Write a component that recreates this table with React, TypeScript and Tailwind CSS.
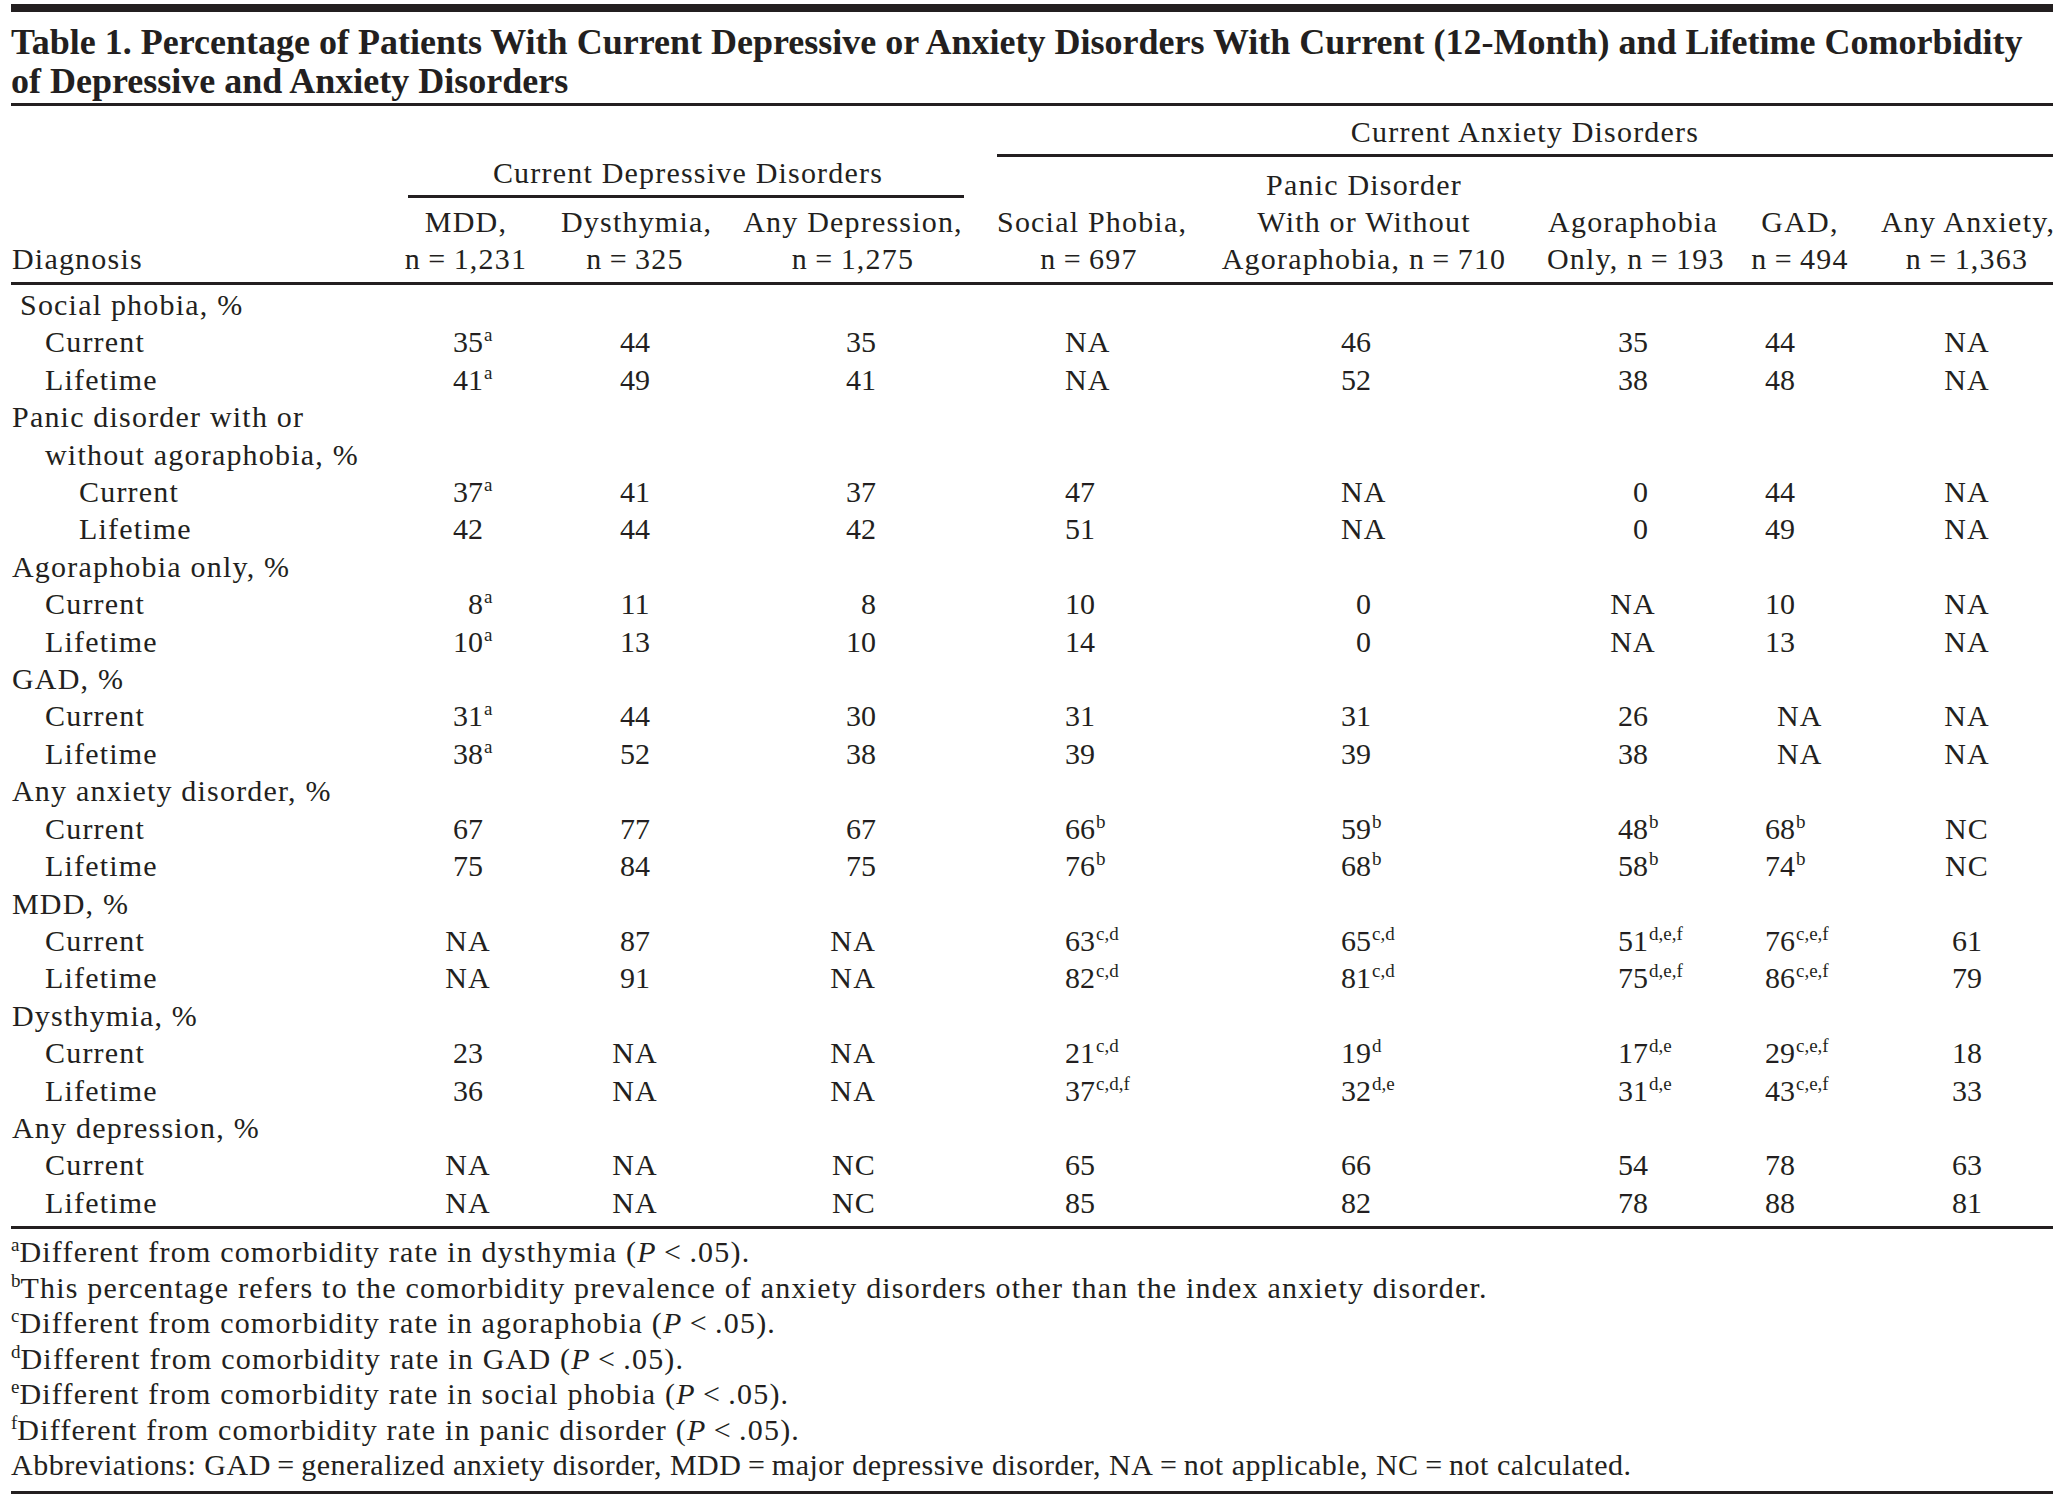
import type { ReactNode } from "react";

type Row = { label: string; level: 0 | 1 | 2; values?: string[]; extraIndent?: boolean };

const rows: Row[] = [
    { label: "Social phobia, %", level: 0, extraIndent: true },
    { label: "Current", level: 1, values: ["35^a", "44", "35", "NA", "46", "35", "44", "NA"] },
    { label: "Lifetime", level: 1, values: ["41^a", "49", "41", "NA", "52", "38", "48", "NA"] },
    { label: "Panic disorder with or", level: 0 },
    { label: "without agoraphobia, %", level: 1 },
    { label: "Current", level: 2, values: ["37^a", "41", "37", "47", "NA", "0", "44", "NA"] },
    { label: "Lifetime", level: 2, values: ["42", "44", "42", "51", "NA", "0", "49", "NA"] },
    { label: "Agoraphobia only, %", level: 0 },
    { label: "Current", level: 1, values: ["8^a", "11", "8", "10", "0", "NA", "10", "NA"] },
    { label: "Lifetime", level: 1, values: ["10^a", "13", "10", "14", "0", "NA", "13", "NA"] },
    { label: "GAD, %", level: 0 },
    { label: "Current", level: 1, values: ["31^a", "44", "30", "31", "31", "26", "NA", "NA"] },
    { label: "Lifetime", level: 1, values: ["38^a", "52", "38", "39", "39", "38", "NA", "NA"] },
    { label: "Any anxiety disorder, %", level: 0 },
    { label: "Current", level: 1, values: ["67", "77", "67", "66^b", "59^b", "48^b", "68^b", "NC"] },
    { label: "Lifetime", level: 1, values: ["75", "84", "75", "76^b", "68^b", "58^b", "74^b", "NC"] },
    { label: "MDD, %", level: 0 },
    { label: "Current", level: 1, values: ["NA", "87", "NA", "63^c,d", "65^c,d", "51^d,e,f", "76^c,e,f", "61"] },
    { label: "Lifetime", level: 1, values: ["NA", "91", "NA", "82^c,d", "81^c,d", "75^d,e,f", "86^c,e,f", "79"] },
    { label: "Dysthymia, %", level: 0 },
    { label: "Current", level: 1, values: ["23", "NA", "NA", "21^c,d", "19^d", "17^d,e", "29^c,e,f", "18"] },
    { label: "Lifetime", level: 1, values: ["36", "NA", "NA", "37^c,d,f", "32^d,e", "31^d,e", "43^c,e,f", "33"] },
    { label: "Any depression, %", level: 0 },
    { label: "Current", level: 1, values: ["NA", "NA", "NC", "65", "66", "54", "78", "63"] },
    { label: "Lifetime", level: 1, values: ["NA", "NA", "NC", "85", "82", "78", "88", "81"] },
];

// per column alignment, written out so tailwind can see them
const colClass = [
    "text-center pl-[4px]",
    "text-center",
    "text-right pr-[121px]",
    "text-left pl-[68px]",
    "text-left pl-[160px]",
    "text-center",
    "text-left pl-[46px]",
    "text-center",
];

const levelClass = ["pl-[1px]", "pl-[34px]", "pl-[68px]"];

function Value({ raw, col }: { raw: string; col: number }) {
    const [num, sup] = raw.split("^");
    const single = /^\d$/.test(num);
    const isNum = /^\d+$/.test(num);
    const shiftNA = col === 6 && (num === "NA" || num === "NC");
    return (
        <span className={`relative ${isNum ? "tracking-normal" : ""} ${shiftNA ? "ml-[12px]" : ""}`}>
            {single ? <span className="invisible">0</span> : null}
            {num}
            {sup ? (
                <span className="absolute left-full top-0 ml-[1px] text-[19px] leading-none tracking-normal whitespace-nowrap">
                    {sup}
                </span>
            ) : null}
        </span>
    );
}

function Sup({ children }: { children: ReactNode }) {
    return <span className="text-[19px] leading-none align-[11px] tracking-normal">{children}</span>;
}

const P = () => <i>P</i>;

export default function App() {
    const T = "\u2009";
    return (
        <div className="min-h-screen bg-white text-[#231f20] font-['Liberation_Serif','Times_New_Roman',serif] text-[30px] tracking-[1.2px] pt-[4px] pl-[11px]">
            <div className="w-[2042px]">
                <div className="h-[8px] bg-[#231f20]" />
                <h1 className="mt-[11px] pb-[2px] border-b-[3px] border-[#231f20] font-bold text-[36px] leading-[39px] tracking-normal">
                    Table 1. Percentage of Patients With Current Depressive or Anxiety Disorders With Current
                    (12-Month) and Lifetime Comorbidity
                    <br />
                    of Depressive and Anxiety Disorders
                </h1>

                {/* header */}
                <div className="flex items-end pb-[5px] border-b-[3px] border-[#231f20] leading-[37px] whitespace-nowrap">
                    <div className="w-[360px] pl-[1px]">Diagnosis</div>
                    <div className="w-[626px] flex flex-col">
                        <div className="ml-[37px] mr-[33px] pb-[4px] border-b-[3px] border-[#231f20] text-center pl-[4px]">
                            Current Depressive Disorders
                        </div>
                        <div className="mt-[5px] grid grid-cols-[190px_148px_288px] items-end text-center">
                            <div>
                                MDD,
                                <br />n{T}={T}1,231
                            </div>
                            <div>
                                Dysthymia,
                                <br />n{T}={T}325
                            </div>
                            <div>
                                Any Depression,
                                <br />n{T}={T}1,275
                            </div>
                        </div>
                    </div>
                    <div className="w-[1056px] flex flex-col">
                        <div className="pt-[7px] pb-[4px] border-b-[3px] border-[#231f20] text-center">
                            Current Anxiety Disorders
                        </div>
                        <div className="mt-[9px] grid grid-cols-[184px_366px_172px_162px_172px] items-end text-center">
                            <div>
                                Social Phobia,
                                <br />n{T}={T}697
                            </div>
                            <div>
                                Panic Disorder
                                <br />
                                With or Without
                                <br />
                                Agoraphobia, n{T}={T}710
                            </div>
                            <div>
                                Agoraphobia
                                <br />
                                Only, n{T}={T}193
                            </div>
                            <div>
                                GAD,
                                <br />n{T}={T}494
                            </div>
                            <div>
                                Any Anxiety,
                                <br />n{T}={T}1,363
                            </div>
                        </div>
                    </div>
                </div>

                {/* body */}
                <div className="pt-[1px] pb-[5px] border-b-[3px] border-[#231f20] grid grid-cols-[360px_190px_148px_288px_184px_366px_172px_162px_172px] leading-[37.4px]">
                    {rows.map((r, i) => (
                        <div key={i} className="contents">
                            <div className={`${levelClass[r.level]} ${r.extraIndent ? "pl-[9px]" : ""} whitespace-nowrap`}>
                                {r.label}
                            </div>
                            {r.values
                                ? r.values.map((v, c) => (
                                      <div key={c} className={`${colClass[c]} whitespace-nowrap`}>
                                          <Value raw={v} col={c} />
                                      </div>
                                  ))
                                : <div className="col-span-8" />}
                        </div>
                    ))}
                </div>

                {/* notes */}
                <div className="pt-[5px] pb-[8px] border-b-[3px] border-[#231f20] leading-[35.5px]">
                    <p>
                        <Sup>a</Sup>Different from comorbidity rate in dysthymia (<P />{T}&lt;{T}.05).
                    </p>
                    <p>
                        <Sup>b</Sup>This percentage refers to the comorbidity prevalence of anxiety disorders other
                        than the index anxiety disorder.
                    </p>
                    <p>
                        <Sup>c</Sup>Different from comorbidity rate in agoraphobia (<P />{T}&lt;{T}.05).
                    </p>
                    <p>
                        <Sup>d</Sup>Different from comorbidity rate in GAD (<P />{T}&lt;{T}.05).
                    </p>
                    <p>
                        <Sup>e</Sup>Different from comorbidity rate in social phobia (<P />{T}&lt;{T}.05).
                    </p>
                    <p>
                        <Sup>f</Sup>Different from comorbidity rate in panic disorder (<P />{T}&lt;{T}.05).
                    </p>
                    <p className="tracking-[0.5px]">
                        Abbreviations: GAD{T}={T}generalized anxiety disorder, MDD{T}={T}major depressive disorder,
                        NA{T}={T}not applicable, NC{T}={T}not calculated.
                    </p>
                </div>
            </div>
        </div>
    );
}
